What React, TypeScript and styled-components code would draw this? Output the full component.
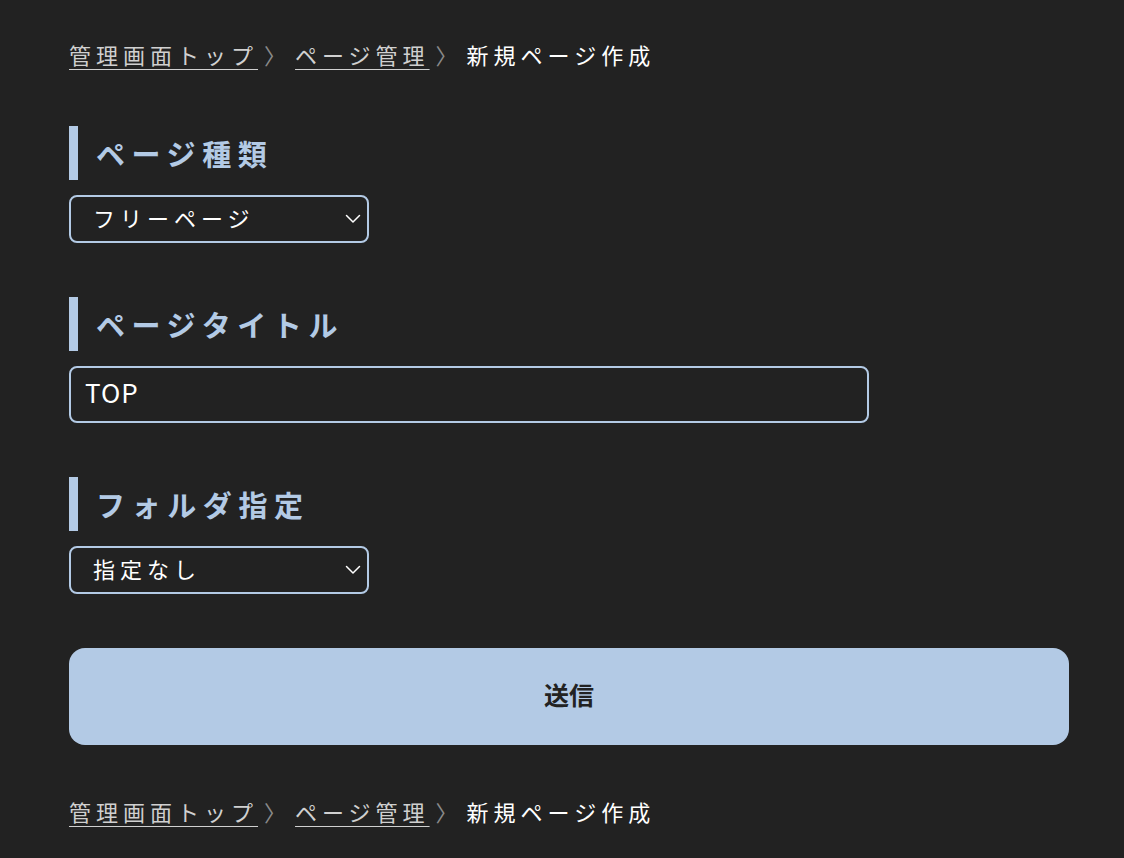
import React from "react";
import styled, { createGlobalStyle } from "styled-components";

const Global = createGlobalStyle`
  html, body { margin: 0; padding: 0; background: #222222; }
  body { font-family: "Noto Sans CJK JP", "Noto Sans", sans-serif; color: #fff; }
`;

const ACCENT = "#b3cae5";

const Page = styled.main`
  padding: 37px 0 0 69px;
  width: 1000px;
`;

const Crumbs = styled.nav<{ $bottom?: boolean }>`
  display: flex;
  align-items: center;
  font-size: 22px;
  line-height: 34px;
  letter-spacing: 5px;
  margin: ${(p) => (p.$bottom ? "49px 0 0" : "0 0 55px")};
`;

const CrumbLink = styled.a`
  color: #d0d0d0;
  text-decoration: underline;
  text-underline-offset: 5px;
  text-decoration-thickness: 1px;
  cursor: pointer;
`;

const Sep = styled.span`
  color: #8a8a8a;
  margin: 0 4px 0 6px;
`;

const Current = styled.span`
  color: #ffffff;
`;

const Section = styled.section`
  display: flex;
  flex-direction: column;
  gap: 15px;
  margin-bottom: 54px;
`;

const Heading = styled.h2`
  margin: 0;
  border-left: 9px solid ${ACCENT};
  padding-left: 18px;
  height: 54px;
  line-height: 54px;
  font-size: 29px;
  font-weight: 700;
  letter-spacing: 6.6px;
  color: ${ACCENT};
`;

const SelectWrap = styled.div`
  position: relative;
  width: 300px;
  height: 48px;
`;

const Select = styled.select`
  appearance: none;
  -webkit-appearance: none;
  box-sizing: border-box;
  width: 100%;
  height: 100%;
  background: #222222;
  color: #fff;
  border: 2px solid ${ACCENT};
  border-radius: 8px;
  padding: 0 40px 5px 22px;
  font-family: "Noto Sans CJK JP", "Noto Sans", sans-serif;
  font-size: 22px;
  letter-spacing: 5px;
  outline: none;
`;

const Chevron = styled.svg`
  position: absolute;
  right: 8px;
  top: 19px;
  width: 16px;
  height: 10px;
  pointer-events: none;
`;

const TextInput = styled.input`
  box-sizing: border-box;
  width: 800px;
  height: 57px;
  background: #222222;
  color: #fff;
  border: 2px solid ${ACCENT};
  border-radius: 8px;
  padding: 0 14px 6px;
  font-family: "Noto Sans CJK JP", "Noto Sans", sans-serif;
  font-size: 26px;
  letter-spacing: 0.04em;
  outline: none;
`;

const Submit = styled.button`
  display: block;
  width: 1000px;
  height: 97px;
  border: none;
  border-radius: 16px;
  background: ${ACCENT};
  color: #222;
  font-family: "Noto Sans CJK JP", "Noto Sans", sans-serif;
  font-size: 25px;
  font-weight: 700;
  padding: 0 0 6px;
  cursor: pointer;
`;

const Breadcrumbs = ({ bottom }: { bottom?: boolean }) => (
  <Crumbs $bottom={bottom}>
    <CrumbLink>管理画面トップ</CrumbLink>
    <Sep>〉</Sep>
    <CrumbLink>ページ管理</CrumbLink>
    <Sep>〉</Sep>
    <Current>新規ページ作成</Current>
  </Crumbs>
);

const Dropdown = ({ options }: { options: string[] }) => (
  <SelectWrap>
    <Select defaultValue={options[0]}>
      {options.map((o) => (
        <option key={o}>{o}</option>
      ))}
    </Select>
    <Chevron viewBox="0 0 16 10" fill="none">
      <path d="M1.5 1.5 L8 8 L14.5 1.5" stroke="#ffffff" strokeWidth="1.5" strokeLinecap="round" strokeLinejoin="round" />
    </Chevron>
  </SelectWrap>
);

export default function App() {
  return (
    <>
      <Global />
      <Page>
        <Breadcrumbs />
        <Section>
          <Heading>ページ種類</Heading>
          <Dropdown options={["フリーページ", "ブログ"]} />
        </Section>
        <Section>
          <Heading>ページタイトル</Heading>
          <TextInput defaultValue="TOP" />
        </Section>
        <Section>
          <Heading>フォルダ指定</Heading>
          <Dropdown options={["指定なし"]} />
        </Section>
        <Submit>送信</Submit>
        <Breadcrumbs bottom />
      </Page>
    </>
  );
}
